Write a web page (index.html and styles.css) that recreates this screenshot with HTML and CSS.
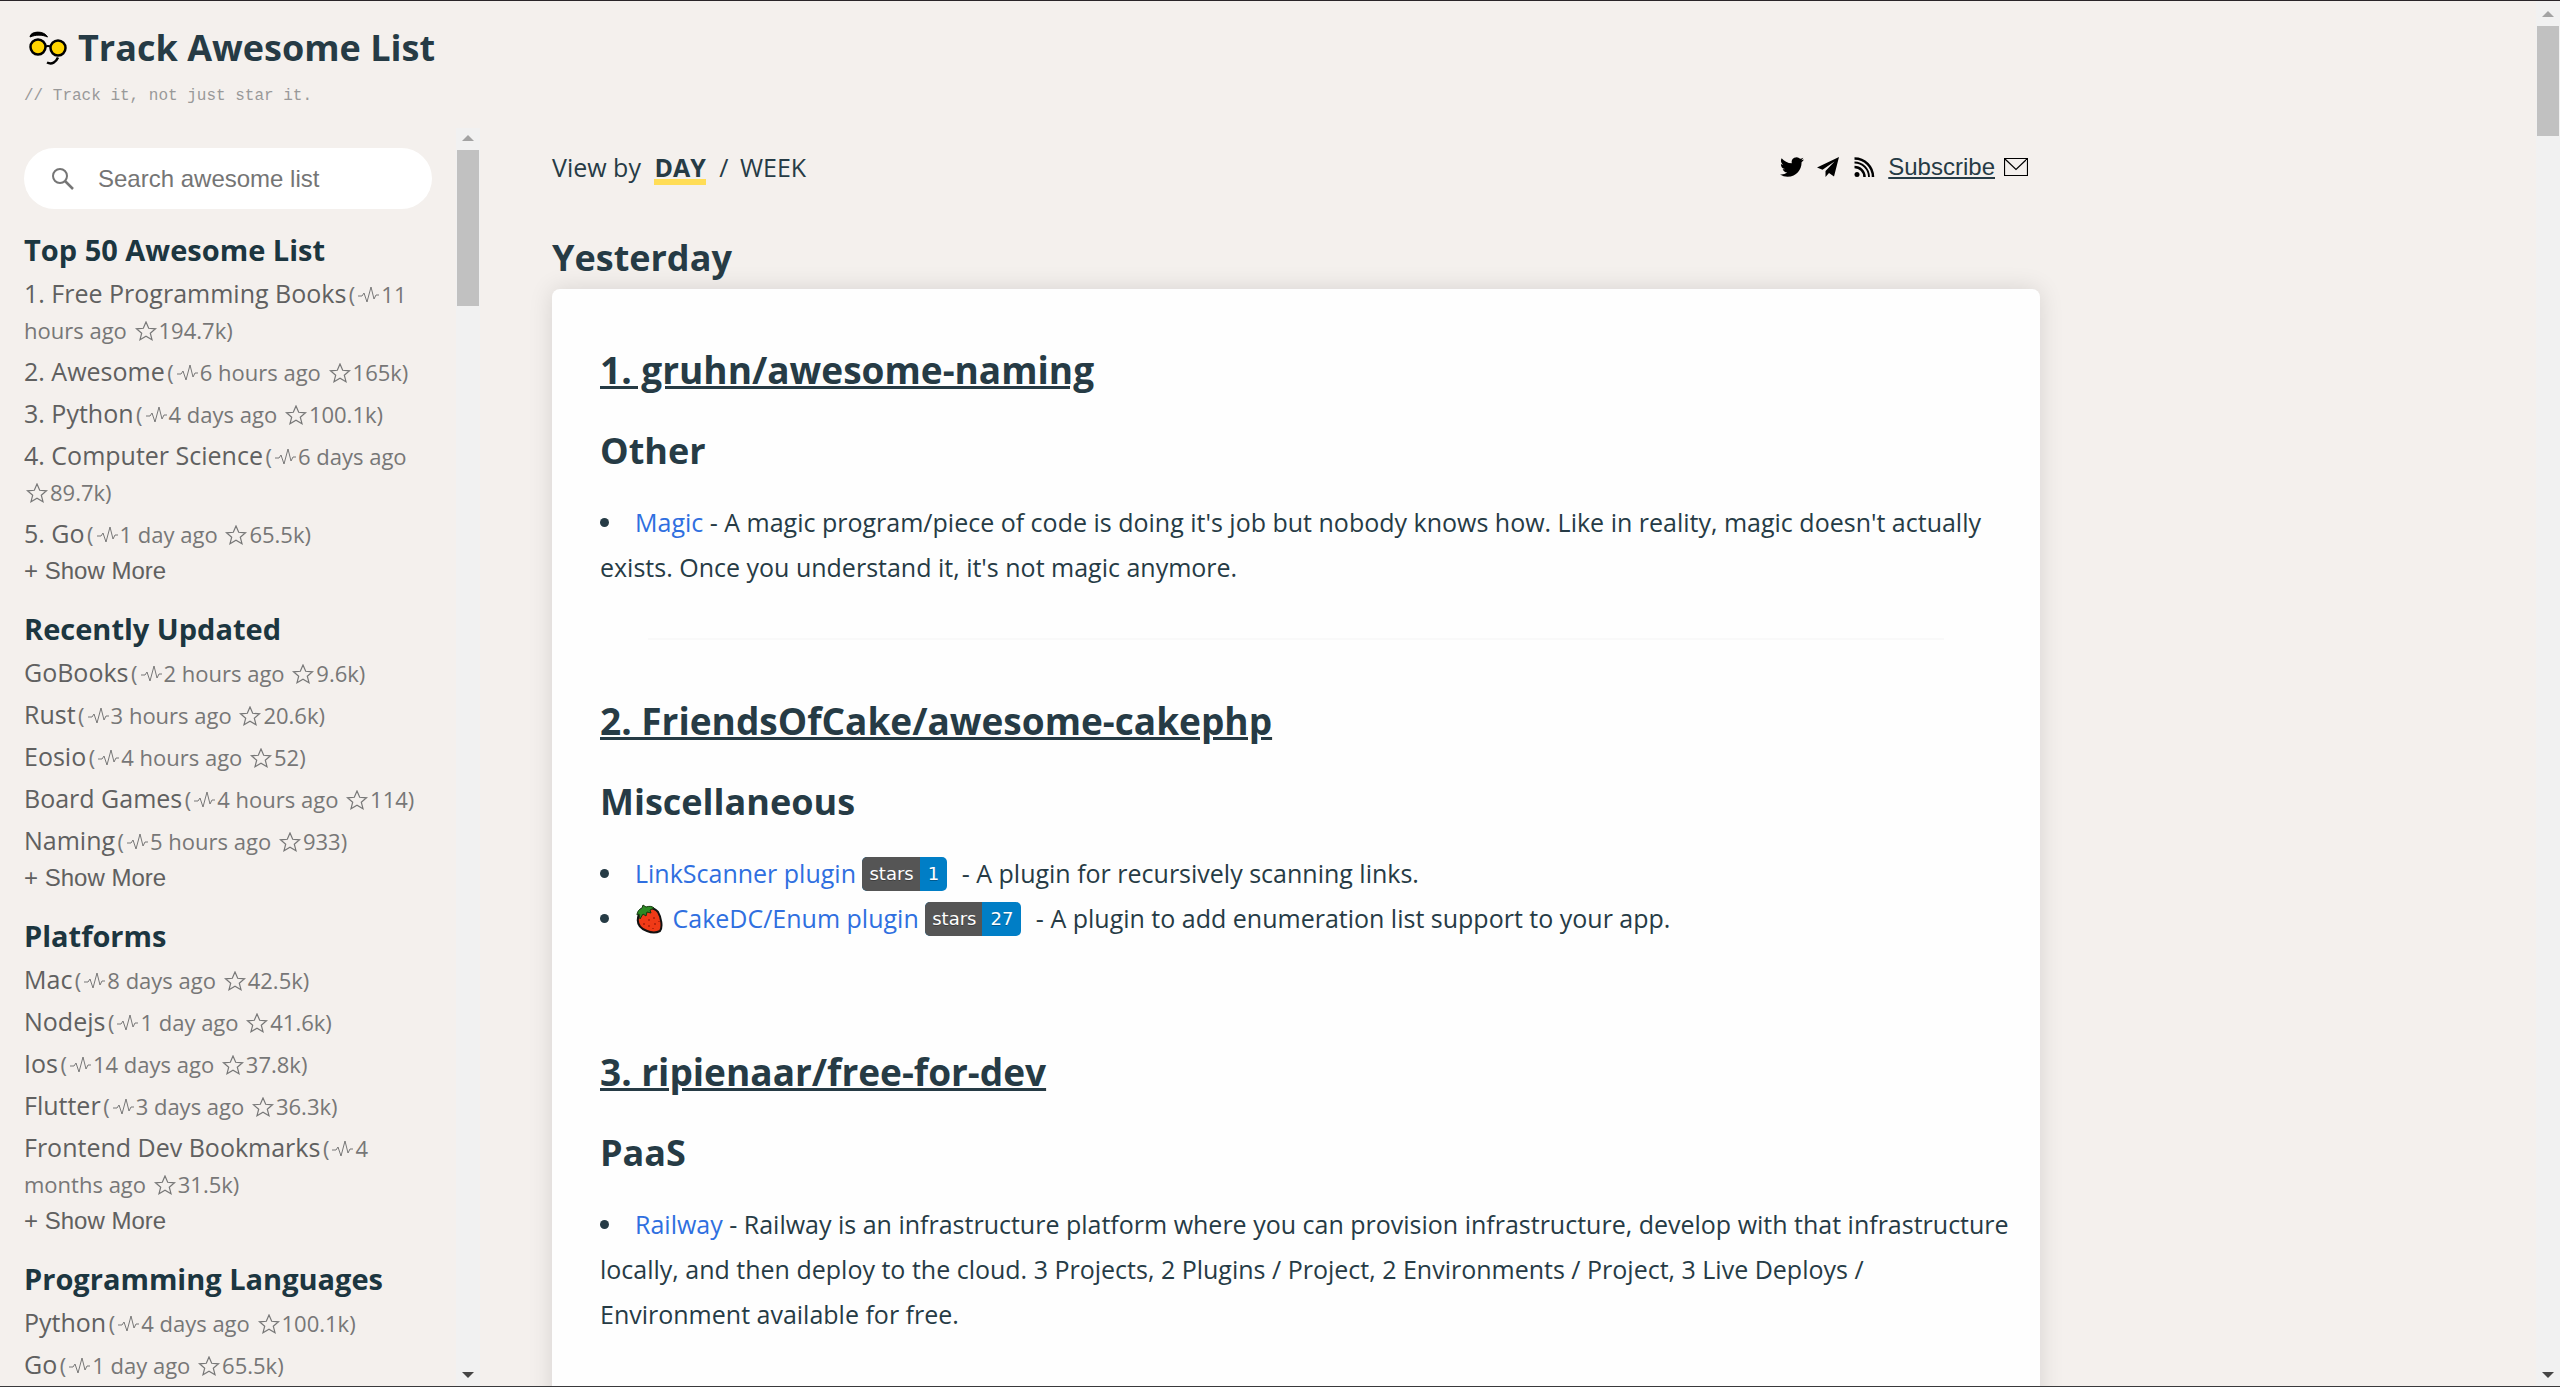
FILE: index.html
```html
<!DOCTYPE html>
<html lang="en">
<head>
  <meta charset="utf-8">
  <title>Track Awesome List</title>
  <link rel="stylesheet" href="styles.css">
</head>
<body>
  <svg class="sprite" aria-hidden="true">
    <symbol id="pulse" viewBox="0 0 24 20">
      <path d="M2 11h4l2-3 3 9 4-15 3 12 2-4h3" fill="none" stroke="currentColor" stroke-width="1"/>
    </symbol>
    <symbol id="star" viewBox="0 0 24 20">
      <path d="M12 1l2.700 6.300 6.800.5-5.200 4.400 1.700 6.500L12 15.200 6 18.700l1.700-6.500L2.500 7.800l6.800-.5z" fill="none" stroke="currentColor" stroke-width="1.200"/>
    </symbol>
  </svg>

  <div class="page">
    <header class="header">
      <h1 class="site-title">
        <svg class="logo" viewBox="24 24 48 44" aria-hidden="true">
          <path d="M30 35C30 29 44 28 47.500 35C42 32.500 36 32.500 30 35z" fill="#000" stroke="#000" stroke-width="1"/>
          <circle cx="38" cy="45" r="7.500" fill="#ffd400" stroke="#000" stroke-width="2.500"/>
          <circle cx="58" cy="46" r="7.500" fill="#ffd400" stroke="#000" stroke-width="2.500"/>
          <path d="M45 44.500q3-1 6 0" fill="none" stroke="#000" stroke-width="2"/>
          <path d="M47 60.500c5 2.500 9-.5 11-5" fill="none" stroke="#000" stroke-width="2.500"/>
        </svg>
        Track Awesome List
      </h1>
      <p class="tagline">// Track it, not just star it.</p>
    </header>

    <div class="columns">
      <aside class="sidebar">
        <div class="sidebar-content">
          <label class="search">
            <svg class="search-icon" viewBox="0 0 24 24" aria-hidden="true">
              <circle cx="9" cy="9" r="7" fill="none" stroke="#757575" stroke-width="2"/>
              <path d="M14 14l8 8" stroke="#757575" stroke-width="2.500"/>
            </svg>
            <input class="search-input" type="search" placeholder="Search awesome list" aria-label="Search awesome list">
          </label>

          <nav class="group">
            <h3>Top 50 Awesome List</h3>
            <ul>
              <li><a href="#">1. Free Programming Books</a> <small>(<svg><use href="#pulse"/></svg>11 hours ago <svg><use href="#star"/></svg>194.7k)</small></li>
              <li><a href="#">2. Awesome</a> <small>(<svg><use href="#pulse"/></svg>6 hours ago <svg><use href="#star"/></svg>165k)</small></li>
              <li><a href="#">3. Python</a> <small>(<svg><use href="#pulse"/></svg>4 days ago <svg><use href="#star"/></svg>100.1k)</small></li>
              <li><a href="#">4. Computer Science</a> <small>(<svg><use href="#pulse"/></svg>6 days ago <span><svg><use href="#star"/></svg>89.7k)</span></small></li>
              <li><a href="#">5. Go</a> <small>(<svg><use href="#pulse"/></svg>1 day ago <svg><use href="#star"/></svg>65.5k)</small></li>
            </ul>
            <button class="show-more" type="button">+ Show More</button>
          </nav>

          <nav class="group">
            <h3>Recently Updated</h3>
            <ul>
              <li><a href="#">GoBooks</a> <small>(<svg><use href="#pulse"/></svg>2 hours ago <svg><use href="#star"/></svg>9.6k)</small></li>
              <li><a href="#">Rust</a> <small>(<svg><use href="#pulse"/></svg>3 hours ago <svg><use href="#star"/></svg>20.6k)</small></li>
              <li><a href="#">Eosio</a> <small>(<svg><use href="#pulse"/></svg>4 hours ago <svg><use href="#star"/></svg>52)</small></li>
              <li><a href="#">Board Games</a> <small>(<svg><use href="#pulse"/></svg>4 hours ago <svg><use href="#star"/></svg>114)</small></li>
              <li><a href="#">Naming</a> <small>(<svg><use href="#pulse"/></svg>5 hours ago <svg><use href="#star"/></svg>933)</small></li>
            </ul>
            <button class="show-more" type="button">+ Show More</button>
          </nav>

          <nav class="group">
            <h3>Platforms</h3>
            <ul>
              <li><a href="#">Mac</a> <small>(<svg><use href="#pulse"/></svg>8 days ago <svg><use href="#star"/></svg>42.5k)</small></li>
              <li><a href="#">Nodejs</a> <small>(<svg><use href="#pulse"/></svg>1 day ago <svg><use href="#star"/></svg>41.6k)</small></li>
              <li><a href="#">Ios</a> <small>(<svg><use href="#pulse"/></svg>14 days ago <svg><use href="#star"/></svg>37.8k)</small></li>
              <li><a href="#">Flutter</a> <small>(<svg><use href="#pulse"/></svg>3 days ago <svg><use href="#star"/></svg>36.3k)</small></li>
              <li><a href="#">Frontend Dev Bookmarks</a> <small>(<svg><use href="#pulse"/></svg>4 months ago <svg><use href="#star"/></svg>31.5k)</small></li>
            </ul>
            <button class="show-more" type="button">+ Show More</button>
          </nav>

          <nav class="group">
            <h3>Programming Languages</h3>
            <ul>
              <li><a href="#">Python</a> <small>(<svg><use href="#pulse"/></svg>4 days ago <svg><use href="#star"/></svg>100.1k)</small></li>
              <li><a href="#">Go</a> <small>(<svg><use href="#pulse"/></svg>1 day ago <svg><use href="#star"/></svg>65.5k)</small></li>
            </ul>
          </nav>
        </div>
        <div class="scrollbar scrollbar-side" aria-hidden="true">
          <i class="arrow-up"></i>
          <i class="thumb"></i>
          <i class="arrow-down"></i>
        </div>
      </aside>

      <main class="main">
        <div class="toolbar">
          <div class="view-by">
            View by <a class="current" href="#">DAY</a> / <a class="week" href="#">WEEK</a>
          </div>
          <div class="social">
            <a href="#" aria-label="Twitter">
              <svg viewBox="0 0 24 24"><path d="M23.950 4.570a10 10 0 0 1-2.820.78 4.960 4.960 0 0 0 2.160-2.720c-.95.55-2 .95-3.130 1.180a4.920 4.920 0 0 0-8.380 4.480C7.690 8.100 4.070 6.130 1.640 3.160a4.820 4.820 0 0 0-.67 2.480c0 1.710.87 3.210 2.190 4.100a4.900 4.900 0 0 1-2.230-.62v.06a4.920 4.920 0 0 0 3.950 4.830 5 5 0 0 1-2.210.08 4.940 4.940 0 0 0 4.600 3.420A9.870 9.870 0 0 1 0 19.540a13.990 13.990 0 0 0 7.560 2.210c9.050 0 14-7.500 14-13.980 0-.21 0-.42-.02-.63a9.940 9.940 0 0 0 2.460-2.550z"/></svg>
            </a>
            <a href="#" aria-label="Telegram">
              <svg viewBox="0 0 24 24"><path d="M23 2L1 12.500l5.500 2.300L18.500 6.500 9.500 16v6l3.500-4 5 3.500z"/></svg>
            </a>
            <a href="#" aria-label="RSS">
              <svg viewBox="0 0 24 24"><circle cx="5" cy="19.500" r="2.500"/><path d="M2.500 12a10 10 0 0 1 10 10M2.500 3.500A18.500 18.500 0 0 1 21 22" fill="none" stroke="#000" stroke-width="2.500"/><path d="M2.500 7.500A14.500 14.500 0 0 1 17 22" fill="none" stroke="#000" stroke-width="1.800"/></svg>
            </a>
            <a class="subscribe" href="#">Subscribe</a>
            <a href="#" aria-label="Subscribe by mail">
              <svg viewBox="0 0 24 24"><path d="M.5 3.500h23v17H.5zM1 4l11 10.500L23 4" fill="none" stroke="#000" stroke-width="1.200"/></svg>
            </a>
          </div>
        </div>

        <h2>Yesterday</h2>

        <div class="card">
          <article>
            <h3><a href="#">1. gruhn/awesome-naming</a></h3>
            <h4>Other</h4>
            <ul>
              <li><a href="#">Magic</a> - A magic program/piece of code is doing it's job but nobody knows how. Like in reality, magic doesn't actually exists. Once you understand it, it's not magic anymore.</li>
            </ul>
          </article>
          <hr>
          <article>
            <h3><a href="#">2. FriendsOfCake/awesome-cakephp</a></h3>
            <h4>Miscellaneous</h4>
            <ul>
              <li><a href="#">LinkScanner plugin</a> <span class="badge"><span>stars</span><b>1</b></span> - A plugin for recursively scanning links.</li>
              <li>
                <svg class="strawberry" viewBox="0 0 28 30" aria-hidden="true">
                  <path d="M4 10C1 18 4 24 12 27c5 2 9 2 13 0 3-4 1-14-2-19C18 2 7 3 4 10z" fill="#f03a17" stroke="#111" stroke-width="2"/>
                  <path d="M2 11c0-3 2-6 5-7l1-3 3 2c3-1 6-1 8 1l-4 2 1 3-4-1-1 4-3-2-3 5-1-5z" fill="#2c8a23" stroke="#16380f" stroke-width="1"/>
                  <path d="M9 19v2M14 15v2M19 13v2M14 21v2M20 19v2M24 17v1M18 24v1" stroke="#a81f0c" stroke-width="1.500"/>
                </svg>
                <a href="#">CakeDC/Enum plugin</a> <span class="badge"><span>stars</span><b>27</b></span> - A plugin to add enumeration list support to your app.
              </li>
            </ul>
          </article>
          <hr class="blank">
          <article>
            <h3><a href="#">3. ripienaar/free-for-dev</a></h3>
            <h4>PaaS</h4>
            <ul>
              <li><a href="#">Railway</a> - Railway is an infrastructure platform where you can provision infrastructure, develop with that infrastructure locally, and then deploy to the cloud. 3 Projects, 2 Plugins / Project, 2 Environments / Project, 3 Live Deploys / Environment available for free.</li>
            </ul>
          </article>
        </div>
      </main>
    </div>
  </div>

  <div class="scrollbar scrollbar-page" aria-hidden="true">
    <i class="arrow-up"></i>
    <i class="thumb"></i>
    <i class="arrow-down"></i>
  </div>
</body>
</html>
```
FILE: styles.css
```css
* {
  box-sizing: border-box;
  margin: 0;
  padding: 0;
}

body {
  display: flex;
  height: 100vh;
  overflow: hidden;
  font-family: "Segoe UI", "Open Sans", sans-serif;
  font-size: 25px;
  line-height: 36px;
  color: #263b45;
  background: #f4f0ed;
  border-top: 1px solid #2a2529;
  border-bottom: 1px solid #3a3a3c;
}

ul {
  list-style: none;
}

.sprite {
  display: none;
}

.page {
  flex: 1;
  min-width: 0;
  display: flex;
  flex-direction: column;
}

/* header */

.header {
  padding: 23px 24px 19px;
}

.site-title {
  display: flex;
  align-items: center;
  gap: 6px;
  font-size: 36px;
  line-height: 48px;
}

.logo {
  width: 48px;
  height: 44px;
}

.tagline {
  margin-top: 11px;
  font-family: "Liberation Mono", monospace;
  font-size: 16px;
  line-height: 26px;
  color: #999;
}

.columns {
  flex: 1;
  min-height: 0;
  display: flex;
  gap: 72px;
}

/* sidebar */

.sidebar {
  flex: none;
  width: 480px;
  display: flex;
}

.sidebar-content {
  flex: 1;
  padding: 20px 24px 0;
  overflow: hidden;
}

.search {
  display: flex;
  align-items: center;
  gap: 22px;
  height: 61px;
  padding: 0 26px;
  border-radius: 32px;
  background: #fff;
}

.search-icon {
  flex: none;
  width: 26px;
  height: 24px;
}

.search-input {
  flex: 1;
  min-width: 0;
  border: none;
  outline: none;
  background: none;
  font-family: "Liberation Sans", Arial, sans-serif;
  font-size: 24px;
  color: #333;
}

.search-input::placeholder {
  color: #757575;
}

.group {
  margin-top: 23px;
}

.group h3 {
  margin-bottom: 4px;
  font-size: 29px;
  line-height: 36px;
  color: #1c3640;
}

.group li {
  padding: 3px 0;
  color: #777;
}

.group a {
  color: #606060;
  text-decoration: none;
}

.group small {
  margin-left: -4px;
  font-size: 22px;
  line-height: 24px;
}

.group small span {
  white-space: nowrap;
}

.group small svg {
  width: 24px;
  height: 20px;
  margin: 0 1px;
  vertical-align: -2px;
}

.show-more {
  display: block;
  height: 34px;
  border: none;
  background: none;
  font-family: "Liberation Sans", Arial, sans-serif;
  font-size: 24px;
  color: #606060;
  cursor: pointer;
}

/* scrollbars */

.scrollbar {
  flex: none;
  width: 24px;
  display: flex;
  flex-direction: column;
  align-items: center;
  background: #f1f1f1;
}

.thumb {
  width: 22px;
  background: #c1c1c1;
}

.scrollbar-side .thumb {
  height: 156px;
}

.scrollbar-page .thumb {
  height: 110px;
}

.arrow-up,
.arrow-down {
  border: 6px solid transparent;
}

.arrow-up {
  margin: 7px 0 9px;
  border-top: none;
  border-bottom-color: #a3a3a3;
}

.scrollbar-page .arrow-up {
  margin-top: 10px;
}

.arrow-down {
  margin-top: auto;
  margin-bottom: 8px;
  border-bottom: none;
  border-top-color: #454545;
}

/* main */

.main {
  flex: 1;
  max-width: 1488px;
  padding-top: 18px;
}

.toolbar {
  display: flex;
  justify-content: space-between;
  align-items: center;
  height: 42px;
  padding-right: 12px;
}

.view-by a {
  color: inherit;
  text-decoration: none;
}

.view-by .current {
  display: inline-block;
  margin: 0 7px;
  line-height: 24px;
  font-weight: 700;
  border-bottom: 6px solid #ffdd57;
}

.view-by .week {
  margin-left: 5px;
}

.social {
  display: flex;
  align-items: center;
  gap: 12px;
}

.social svg {
  display: block;
  width: 24px;
  height: 24px;
}

.social .subscribe {
  margin-right: -3px;
  font-family: "Liberation Sans", Arial, sans-serif;
  font-size: 24px;
  color: #263b45;
}

.main h2 {
  margin-top: 46px;
  font-size: 36px;
  line-height: 48px;
}

.card {
  margin-top: 7px;
  padding: 54px 28px 54px 48px;
  min-height: 100vh;
  border-radius: 8px;
  background: #fefefe;
  box-shadow: 0 0 24px rgba(0, 0, 0, 0.12);
}

.card h3,
.card h4 {
  font-size: 36px;
  line-height: 54px;
}

.card h3 {
  font-size: 37px;
}

.card h3 a {
  color: inherit;
}

.card h4 {
  margin: 27px 0 22px;
}

.card ul {
  list-style: disc inside;
  line-height: 45px;
}

.card li a {
  color: #2f6fe0;
  text-decoration: none;
}

.card hr {
  margin: 48px 68px 54px 48px;
  border: none;
  border-top: 2px solid #f9f9f9;
}

.card hr.blank {
  border-color: transparent;
}

.badge {
  display: inline-flex;
  height: 34px;
  margin-right: 8px;
  border-radius: 5px;
  overflow: hidden;
  vertical-align: 3px;
  font-family: Verdana, "DejaVu Sans", sans-serif;
  font-size: 18px;
  line-height: 34px;
  color: #fff;
  background: #007ec6;
  text-shadow: 0 1px 0 rgba(0, 0, 0, 0.3);
}

.badge span {
  padding: 0 6px 0 7px;
  background: #555;
}

.badge b {
  padding: 0 8px;
  font-weight: 400;
}

.strawberry {
  width: 28px;
  height: 30px;
  margin-right: 3px;
  vertical-align: -6px;
}
```
